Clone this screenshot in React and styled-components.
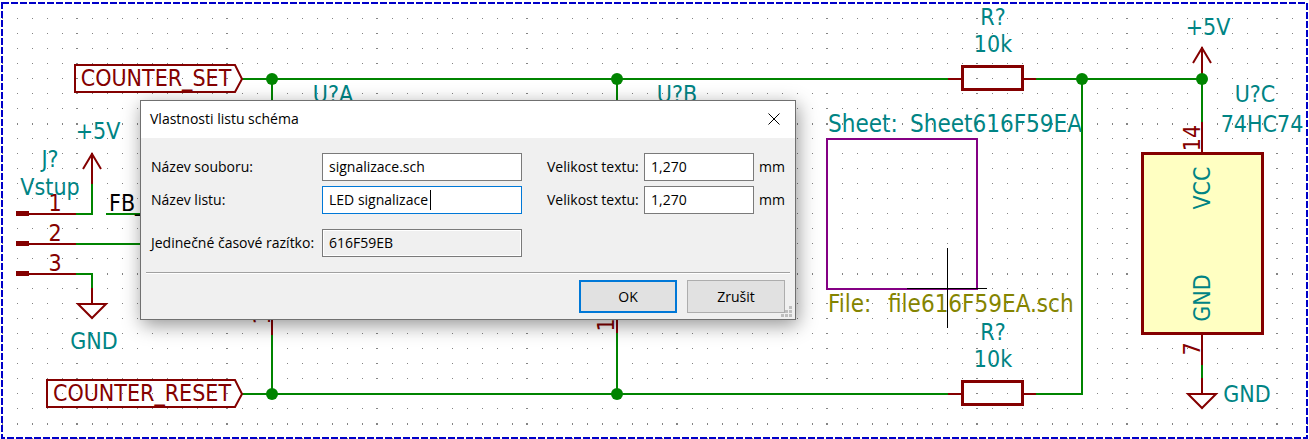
import React, { useState } from "react";
import styled, { createGlobalStyle, css } from "styled-components";

const colors = {
  wire: "#008400",
  part: "#840000",
  label: "#008484",
  file: "#848400",
  sheet: "#840084",
  frame: "#0000c8",
  body: "#ffffc2",
  accent: "#0078d7",
};

const GlobalStyle = createGlobalStyle`
  *, *::before, *::after { box-sizing: border-box; }
  body { margin: 0; background: #fff; overflow: hidden; }
`;

const Workspace = styled.main`
  position: relative;
  min-height: 100vh;
  overflow: hidden;
  background: #fff;
`;

const Drawing = styled.svg`
  display: block;
  width: 100%;
  height: 100vh;
  font-family: "DejaVu Sans Condensed", "DejaVu Sans", sans-serif;
`;

const Frame = styled.rect`
  width: calc(100% - 4px);
  height: calc(100% - 4px);
  fill: none;
  stroke: ${colors.frame};
  stroke-width: 2;
  stroke-dasharray: 7 2;
`;

const Line = styled.path`
  fill: none;
  stroke: ${(p) => p.$color};
  stroke-width: ${(p) => p.$weight || 2};
`;

const Note = styled.text`
  font-size: ${(p) => (p.$large ? 24 : 23)}px;
  fill: ${(p) => p.$color || colors.label};
  text-anchor: ${(p) => p.$anchor || "middle"};
`;

const Window = styled.form`
  position: absolute;
  left: 140px;
  top: 100px;
  width: 656px;
  max-width: calc(100% - 140px);
  border: 1px solid #707070;
  background: #f0f0f0;
  box-shadow: 2px 5px 18px rgba(0, 0, 0, 0.42);
  font-family: "Open Sans", "Noto Sans", sans-serif;
  font-size: 14px;
  line-height: 20px;
  color: #000;
`;

const TitleBar = styled.header`
  display: flex;
  align-items: center;
  justify-content: space-between;
  height: 37px;
  padding: 0 7px 1px 9px;
  background: #fff;
`;

const Title = styled.h1`
  margin: 0;
  font-size: 14px;
  font-weight: 400;
`;

const CloseButton = styled.button`
  display: flex;
  align-items: center;
  justify-content: center;
  width: 28px;
  height: 28px;
  padding: 0;
  border: 0;
  background: none;
`;

const Fields = styled.div`
  display: flex;
  flex-direction: column;
  gap: 5px;
  padding: 15px 5px 15px 10px;
`;

const Row = styled.div`
  display: grid;
  grid-template-columns: 171px 200px 122px 110px auto;
  align-items: center;
  margin-top: ${(p) => (p.$spaced ? 10 : 0)}px;
`;

const Label = styled.label`
  white-space: nowrap;
  padding-left: ${(p) => (p.$second ? 25 : 0)}px;
`;

const Unit = styled.span`
  padding-left: 5px;
`;

const InputWrap = styled.div`
  position: relative;
`;

const Input = styled.input`
  display: block;
  width: 100%;
  height: 28px;
  padding: 0 6px 2px;
  border: 1px solid #7a7a7a;
  border-radius: 0;
  outline: 0;
  background: #fff;
  font: inherit;
  color: inherit;
  ${(p) => p.$active && css`border-color: ${colors.accent};`}
  &:read-only {
    background: #f0f0f0;
    box-shadow: inset 0 0 0 1px #fff;
  }
`;

const Caret = styled.span`
  position: absolute;
  left: 108px;
  top: 4px;
  width: 1px;
  height: 20px;
  background: #000;
`;

const Footer = styled.footer`
  position: relative;
  display: flex;
  justify-content: flex-end;
  gap: 10px;
  margin: 0 5px;
  padding: 7px 5px 6px;
  border-top: 1px solid #a0a0a0;
  box-shadow: inset 0 1px 0 #fff;
`;

const Button = styled.button`
  width: 98px;
  height: 33px;
  padding: 0;
  border: ${(p) => (p.$primary ? `2px solid ${colors.accent}` : "1px solid #adadad")};
  background: #e1e1e1;
  font: inherit;
  color: inherit;
`;

const Grip = styled.svg`
  position: absolute;
  right: -2px;
  bottom: 2px;
  width: 11px;
  height: 11px;
`;

function DotGrid() {
  const steps = Array.from({ length: 10 }, (_, i) => i * 15);
  return (
    <>
      <defs>
        <pattern id="dots" x="76" y="123" width="150" height="150" patternUnits="userSpaceOnUse">
          {steps.map((y) =>
            steps.map((x) => (
              <rect
                key={`${x}-${y}`}
                x={x === 0 ? 0 : x + 1}
                y={y}
                width={x === 0 ? 2 : 1}
                height={y === 0 ? 2 : 1}
                fill="#848484"
              />
            ))
          )}
        </pattern>
      </defs>
      <rect width="100%" height="100%" fill="url(#dots)" />
    </>
  );
}

function Resistor({ y }) {
  return (
    <g>
      <Line $color={colors.part} d={`M948 ${y}H962M1023 ${y}H1036`} />
      <Line $color={colors.part} $weight={3} d={`M962.5 ${y - 12.5}H1022.5V${y + 10.5}H962.5Z`} />
      <Note x="993" y={y - 54}>R?</Note>
      <Note x="993" y={y - 27}>10k</Note>
    </g>
  );
}

function Ground({ x, y }) {
  return (
    <Line $color={colors.part} d={`M${x} ${y - 16}V${y}M${x - 14} ${y}H${x + 14}L${x} ${y + 14}Z`} />
  );
}

function Supply({ x, y, end }) {
  return (
    <Line $color={colors.part} d={`M${x} ${y}V${end}M${x - 9} ${y + 16}L${x} ${y + 1}L${x + 9} ${y + 16}`} />
  );
}

function Pin({ y, number }) {
  return (
    <g>
      <rect x="16" y={y - 3} width="13" height="5" fill={colors.part} />
      <Line $color={colors.part} d={`M29 ${y}H76`} />
      <Note x="55" y={y - 3} $color={colors.part}>{number}</Note>
    </g>
  );
}

function Upright({ x, y, color, children }) {
  return (
    <Note transform={`translate(${x} ${y}) rotate(-90)`} $color={color}>{children}</Note>
  );
}

const junctions = [[272, 79], [617, 79], [1082, 79], [1202, 79], [272, 394], [617, 394]];

function Schematic() {
  return (
    <Drawing role="img" aria-label="Schéma">
      <DotGrid />
      <Frame x="2" y="3" />

      <Pin y={214} number="1" />
      <Pin y={244} number="2" />
      <Pin y={274} number="3" />
      <Resistor y={79} />
      <Resistor y={394} />

      <rect x="1142.5" y="153.5" width="120" height="180" fill={colors.body} stroke={colors.part} strokeWidth="3" />
      <Line $color={colors.part} d="M1202 122V153M1202 335V366M272 310V335M617 310V333" />

      <Line
        $color={colors.wire}
        d="M242 79H948M1036 79H1202M1082 79V394M242 394H948M1036 394H1083M272 79V110M617 79V110M272 335V394M617 333V394M1202 79V122M1202 365V378M76 214H92V184M76 244H150M76 274H92V288M106 214H150"
      />
      <Ground x={92} y={304} />
      <Ground x={1202} y={394} />
      <Supply x={92} y={153} end={184} />
      <Supply x={1202} y={47} end={79} />
      {junctions.map(([x, y]) => (
        <circle key={`${x}-${y}`} cx={x} cy={y} r="6" fill={colors.wire} />
      ))}

      <Line $color={colors.part} d="M75 65H235L242 79L235 92H75Z" />
      <Line $color={colors.part} d="M47 380H235L242 394L235 407H47Z" />
      <Note x="156" y="86" $color={colors.part}>COUNTER_SET</Note>
      <Note x="142" y="401" $color={colors.part}>COUNTER_RESET</Note>

      <Note x="98" y="139">+5V</Note>
      <Note x="50" y="167">J?</Note>
      <Note x="50" y="195">Vstup</Note>
      <Note x="94" y="349">GND</Note>
      <Note x="109" y="211" $color="#000" $anchor="start">FB_</Note>
      <Note x="333" y="102">U?A</Note>
      <Note x="677" y="102">U?B</Note>
      <Note x="1208" y="35">+5V</Note>
      <Note x="1255" y="102">U?C</Note>
      <Note x="1262" y="132">74HC74</Note>
      <Note x="1247" y="402">GND</Note>

      <Upright x={1200} y={138} color={colors.part}>14</Upright>
      <Upright x={1200} y={349} color={colors.part}>7</Upright>
      <Upright x={270} y={318} color={colors.part}>1</Upright>
      <Upright x={614} y={325} color={colors.part}>1</Upright>
      <Upright x={1210} y={188}>VCC</Upright>
      <Upright x={1210} y={298}>GND</Upright>

      <Line $color={colors.sheet} d="M827 139H977V289H827Z" />
      <Note x="828" y="132" $anchor="start" $large>Sheet:</Note>
      <Note x="910" y="132" $anchor="start" $large>Sheet616F59EA</Note>
      <Note x="828" y="312" $anchor="start" $large $color={colors.file}>File:</Note>
      <Note x="888" y="312" $anchor="start" $large $color={colors.file}>file616F59EA.sch</Note>
      <Line $color="#000" $weight={1} d="M947.5 248V328M907 288.5H987" />
    </Drawing>
  );
}

function Field({ id, value, onChange, active, readOnly }) {
  return (
    <InputWrap>
      <Input
        id={id}
        value={value}
        readOnly={readOnly}
        $active={active}
        onChange={onChange && ((e) => onChange(e.target.value))}
      />
      {active && <Caret />}
    </InputWrap>
  );
}

function SheetDialog() {
  const [file, setFile] = useState("signalizace.sch");
  const [name, setName] = useState("LED signalizace");
  const [fileSize, setFileSize] = useState("1,270");
  const [nameSize, setNameSize] = useState("1,270");
  return (
    <Window role="dialog" aria-labelledby="dialog-title" onSubmit={(e) => e.preventDefault()}>
      <TitleBar>
        <Title id="dialog-title">Vlastnosti listu schéma</Title>
        <CloseButton type="button" aria-label="Zavřít">
          <svg width="12" height="12" viewBox="0 0 12 12" stroke="#000" fill="none">
            <path d="M.5 .5L11.5 11.5M11.5 .5L.5 11.5" />
          </svg>
        </CloseButton>
      </TitleBar>
      <Fields>
        <Row>
          <Label htmlFor="file">Název souboru:</Label>
          <Field id="file" value={file} onChange={setFile} />
          <Label htmlFor="file-size" $second>Velikost textu:</Label>
          <Field id="file-size" value={fileSize} onChange={setFileSize} />
          <Unit>mm</Unit>
        </Row>
        <Row>
          <Label htmlFor="name">Název listu:</Label>
          <Field id="name" value={name} onChange={setName} active />
          <Label htmlFor="name-size" $second>Velikost textu:</Label>
          <Field id="name-size" value={nameSize} onChange={setNameSize} />
          <Unit>mm</Unit>
        </Row>
        <Row $spaced>
          <Label htmlFor="stamp">Jedinečné časové razítko:</Label>
          <Field id="stamp" value="616F59EB" readOnly />
        </Row>
      </Fields>
      <Footer>
        <Button type="submit" $primary>OK</Button>
        <Button type="button">Zrušit</Button>
        <Grip viewBox="0 0 11 11" fill="#bfbfbf" aria-hidden="true">
          <path d="M8 0h3v3h-3zM4 4h3v3h-3zM8 4h3v3h-3zM0 8h3v3h-3zM4 8h3v3h-3zM8 8h3v3h-3z" />
        </Grip>
      </Footer>
    </Window>
  );
}

export default function App() {
  return (
    <>
      <GlobalStyle />
      <Workspace>
        <Schematic />
        <SheetDialog />
      </Workspace>
    </>
  );
}
